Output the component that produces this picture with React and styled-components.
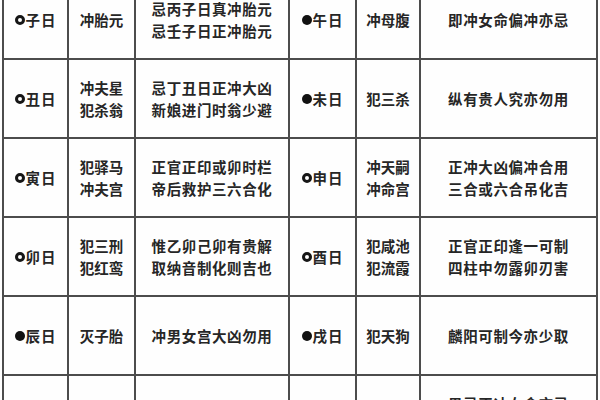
import React from "react";
import styled, { createGlobalStyle } from "styled-components";

const Global = createGlobalStyle`
  html, body { margin: 0; padding: 0; background: #fff; }
  body { font-family: "Noto Sans CJK SC", "Noto Sans", sans-serif; }
`;

const Viewport = styled.div`
  width: 600px;
  height: 400px;
  overflow: hidden;
  background: #fefefe;
`;

const Table = styled.table`
  margin: -21px 0 0 2px;
  border-collapse: collapse;
  table-layout: fixed;
  width: 596px;
  border-left: 2px solid #1e1e1e;
  border-right: 2px solid #2a2a2a;
  color: #262626;
  font-size: 14.5px;
  font-weight: 700;
  line-height: 22px;
`;

const Col = styled.col`
  width: ${(p) => p.$w}px;
`;

const Row = styled.tr`
  height: 79px;
`;

const Cell = styled.td`
  border: 2px solid #4c4c4c;
  text-align: center;
  vertical-align: middle;
  padding: 0;
  white-space: nowrap;
  letter-spacing: ${(p) => (p.$wide ? "0.6px" : "0")};
`;

const Day = styled.span`
  display: inline-flex;
  align-items: center;
  gap: 1px;
  letter-spacing: 1px;
`;

const Mark = styled.span`
  display: inline-block;
  box-sizing: border-box;
  width: 10px;
  height: 10px;
  border-radius: 50%;
  background: ${(p) => (p.$filled ? "#111" : "#fff")};
  border: ${(p) => (p.$filled ? "none" : "3px solid #161616")};
  margin-top: 1px;
`;

const Line = styled.div``;

const widths = [65, 67, 154, 67, 64, 177];

const rows = [
  {
    l: { f: false, d: "子日" }, a: ["冲胎元"], b: ["忌丙子日真冲胎元", "忌壬子日正冲胎元"],
    r: { f: true, d: "午日" }, c: ["冲母腹"], e: ["即冲女命偏冲亦忌"],
  },
  {
    l: { f: false, d: "丑日" }, a: ["冲夫星", "犯杀翁"], b: ["忌丁丑日正冲大凶", "新娘进门时翁少避"],
    r: { f: true, d: "未日" }, c: ["犯三杀"], e: ["纵有贵人究亦勿用"],
  },
  {
    l: { f: false, d: "寅日" }, a: ["犯驿马", "冲夫宫"], b: ["正官正印或卯时栏", "帝后救护三六合化"],
    r: { f: false, d: "申日" }, c: ["冲天嗣", "冲命宫"], e: ["正冲大凶偏冲合用", "三合或六合吊化吉"],
  },
  {
    l: { f: false, d: "卯日" }, a: ["犯三刑", "犯红鸾"], b: ["惟乙卯己卯有贵解", "取纳音制化则吉也"],
    r: { f: false, d: "酉日" }, c: ["犯咸池", "犯流霞"], e: ["正官正印逢一可制", "四柱中勿露卯刃害"],
  },
  {
    l: { f: true, d: "辰日" }, a: ["灭子胎"], b: ["冲男女宫大凶勿用"],
    r: { f: true, d: "戌日" }, c: ["犯天狗"], e: ["麟阳可制今亦少取"],
  },
  {
    l: { f: false, d: "巳日" }, a: ["犯勾绞"], b: ["冲翁姑宫大凶勿用"],
    r: { f: true, d: "亥日" }, c: ["犯孤辰"], e: ["男忌正冲女命亦忌", "天德月德可以解化"],
  },
];

const Lines = ({ items }) => items.map((t, i) => <Line key={i}>{t}</Line>);

const DayCell = ({ v }) => (
  <Cell>
    <Day>
      <Mark $filled={v.f} />
      {v.d}
    </Day>
  </Cell>
);

export default function App() {
  return (
    <Viewport>
      <Global />
      <Table>
        <colgroup>
          {widths.map((w, i) => (
            <Col key={i} $w={w} />
          ))}
        </colgroup>
        <tbody>
          {rows.map((r, i) => (
            <Row key={i}>
              <DayCell v={r.l} />
              <Cell><Lines items={r.a} /></Cell>
              <Cell $wide><Lines items={r.b} /></Cell>
              <DayCell v={r.r} />
              <Cell><Lines items={r.c} /></Cell>
              <Cell $wide><Lines items={r.e} /></Cell>
            </Row>
          ))}
        </tbody>
      </Table>
    </Viewport>
  );
}
